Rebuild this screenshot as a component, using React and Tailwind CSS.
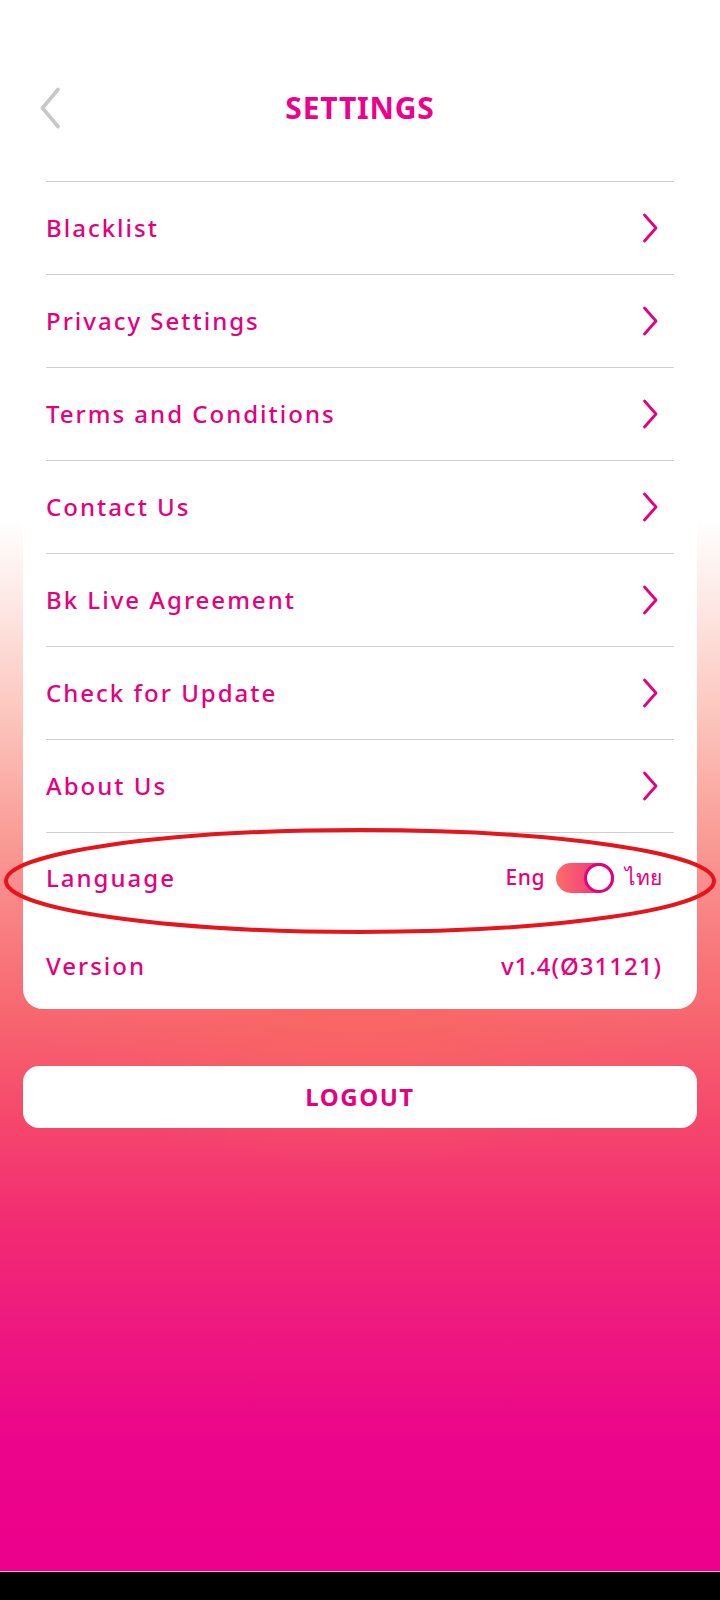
import React, { useState } from "react";

const items = [
  "Blacklist",
  "Privacy Settings",
  "Terms and Conditions",
  "Contact Us",
  "Bk Live Agreement",
  "Check for Update",
  "About Us",
];

function ChevronRight() {
  return (
    <svg width="16" height="30" viewBox="0 0 16 30" fill="none">
      <path d="M2.5 2 L14 15 L2.5 28" stroke="#e6007e" strokeWidth="2.8" strokeLinecap="round" strokeLinejoin="round" />
    </svg>
  );
}

function BackIcon() {
  return (
    <svg width="22" height="42" viewBox="0 0 22 42" fill="none">
      <path d="M19 2.5 L3.5 21 L19 39.5" stroke="#c8c8c8" strokeWidth="3.6" strokeLinecap="round" strokeLinejoin="round" />
    </svg>
  );
}

export default function App() {
  const [thai, setThai] = useState(true);

  return (
    <div className="relative w-[720px] font-['Noto_Sans',sans-serif] text-[#e6007e]">
      <div className="h-[1571px] bg-[radial-gradient(ellipse_320px_160px_at_360px_1010px,rgba(251,105,90,0.55),rgba(251,105,90,0)),linear-gradient(180deg,#ffffff_0px,#ffffff_520px,#fde6e2_610px,#fcc4bc_720px,#fa9e98_830px,#f8787c_950px,#f7686f_1010px,#f54a6c_1110px,#f22c72_1220px,#ee1680_1340px,#ec058a_1440px,#ec008c_1571px)]">
        {/* header */}
        <div className="pt-[60px]">
          <div className="grid h-[95px] grid-cols-[1fr_auto_1fr] items-center">
            <button className="pl-[39px] text-left">
              <BackIcon />
            </button>
            <h1 className="text-[30px] font-bold tracking-[0.8px] text-[#ec008c]">SETTINGS</h1>
            <div />
          </div>
        </div>

        {/* settings card */}
        <div className="mx-[23px] mt-[26px] rounded-b-[20px] bg-white px-[23px]">
          <div className="border-t border-[#cfcfcf]" />
          {items.map((label) => (
            <div key={label} className="flex h-[93px] items-center justify-between border-b border-[#cfcfcf]">
              <span className="text-[24px] font-medium tracking-[2px]">{label}</span>
              <span className="mr-[16px] flex">
                <ChevronRight />
              </span>
            </div>
          ))}

          <div className="flex h-[90px] items-center justify-between">
            <span className="text-[24px] font-medium tracking-[2px]">Language</span>
            <div className="mr-[12px] flex items-center gap-[11px]">
              <span className="text-[21px] font-medium tracking-[0.5px]">Eng</span>
              <button
                onClick={() => setThai(!thai)}
                className="relative h-[30px] w-[58px] rounded-full bg-[linear-gradient(90deg,#fb6e66,#ee2489)]"
              >
                <span
                  className={
                    thai
                      ? "absolute right-0 top-0 h-[30px] w-[30px] rounded-full border-[3px] border-[#e6007e] bg-white"
                      : "absolute left-0 top-0 h-[30px] w-[30px] rounded-full border-[3px] border-[#e6007e] bg-white"
                  }
                />
              </button>
              <span className="text-[21px] font-medium">ไทย</span>
            </div>
          </div>

          <div className="flex h-[86px] items-center justify-between">
            <span className="text-[24px] font-medium tracking-[2px]">Version</span>
            <span className="mr-[12px] text-[24px] font-medium tracking-[1px]">v1.4(Ø31121)</span>
          </div>
        </div>

        {/* logout */}
        <div className="mx-[23px] mt-[57px]">
          <button className="flex h-[62px] w-full items-center justify-center rounded-[16px] bg-white text-[24px] font-bold tracking-[1.5px] text-[#e6007e]">
            LOGOUT
          </button>
        </div>
      </div>
      <div className="h-[1px] bg-[#f7a6cf]" />
      <div className="h-[28px] bg-black" />

      {/* red annotation ellipse */}
      <svg className="pointer-events-none absolute left-0 top-0" width="720" height="1600">
        <ellipse cx="360" cy="881" rx="354" ry="51" fill="none" stroke="#e8141c" strokeWidth="4" />
      </svg>
    </div>
  );
}
